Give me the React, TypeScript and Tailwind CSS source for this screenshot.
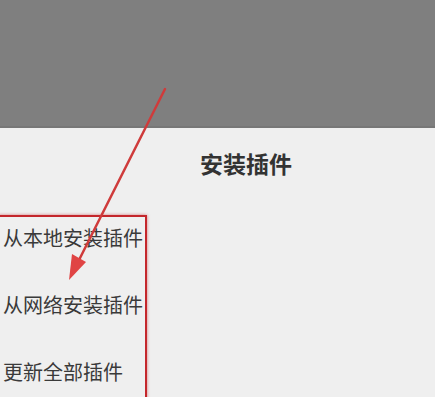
import React from 'react';

const items = ['从本地安装插件', '从网络安装插件', '更新全部插件'];

export default function App() {
  return (
    <div
      className="relative w-[435px] h-[397px] overflow-hidden bg-[#efefef]"
      style={{ fontFamily: '"Noto Sans CJK SC", "Noto Sans", sans-serif' }}
    >
      <div className="h-[128px] bg-[#7f7f7f] border-b-2 border-[#777]" />
      <div className="pl-[200px] pt-[20px] text-[23px] leading-[30px] font-bold text-[#333]">
        安装插件
      </div>
      <div className="mt-[37px] w-[149px] h-[190px] -ml-[2px] border-2 border-[#c4262b] shadow-[0_0_3px_rgba(196,38,43,0.6)]">
        <ul className="flex flex-col pl-[3px] pt-[6px] text-[20px] leading-[30px] text-[#3a3a3a]">
          {items.map((t) => (
            <li key={t} className="h-[67px]">
              {t}
            </li>
          ))}
        </ul>
      </div>
      {/* annotation arrow */}
      <svg className="absolute left-0 top-0" width="435" height="397" viewBox="0 0 435 397">
        <line x1="165" y1="89" x2="78" y2="262" stroke="#cf3b3b" strokeWidth="2.5" strokeLinecap="round" />
        <polygon points="69,280 72,254 86,262" fill="#e04444" />
      </svg>
    </div>
  );
}
